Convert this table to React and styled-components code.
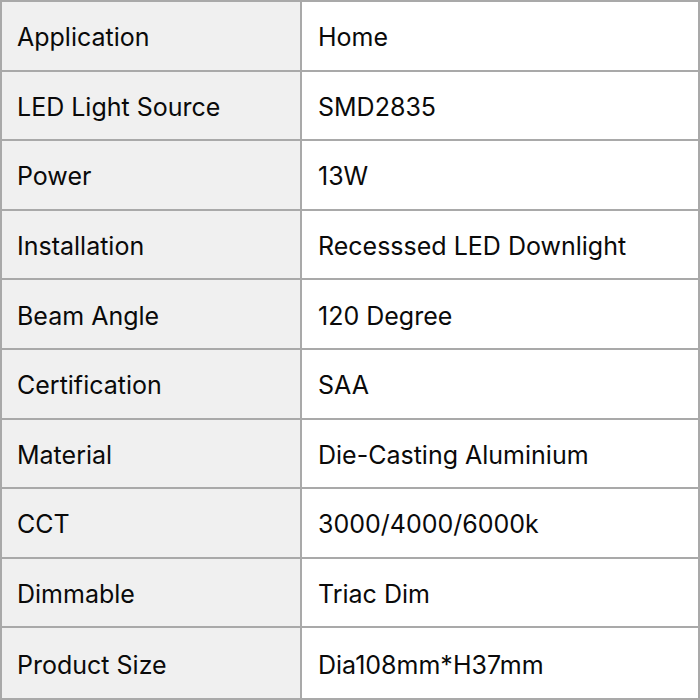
import React from 'react'
import styled, {createGlobalStyle} from 'styled-components'

const Global = createGlobalStyle`
  html, body {
    margin: 0;
    padding: 0;
    background: #fff;
  }
`;

const Table = styled.div`
  box-sizing: border-box;
  width: 700px;
  height: 700px;
  border: 2px solid #a9a9a9;
  display: grid;
  grid-template-columns: 300px 1fr;
  grid-template-rows: repeat(10, 1fr);
  font-family: Inter, "Liberation Sans", sans-serif;
  font-size: 25px;
  color: #0a0a0a;
`;

const Cell = styled.div`
  box-sizing: border-box;
  display: flex;
  align-items: center;
  padding: 3px 0 0 ${p => p.$label ? '15px' : '16px'};
  background: ${p => p.$label ? '#f0f0f0' : '#fff'};
  border-right: ${p => p.$label ? '2px solid #a9a9a9' : 'none'};
  border-bottom: ${p => p.$last ? 'none' : '2px solid #a9a9a9'};
`;

const specs = [
  ['Application', 'Home'],
  ['LED Light Source', 'SMD2835'],
  ['Power', '13W'],
  ['Installation', 'Recesssed LED Downlight'],
  ['Beam Angle', '120 Degree'],
  ['Certification', 'SAA'],
  ['Material', 'Die-Casting Aluminium'],
  ['CCT', '3000/4000/6000k'],
  ['Dimmable', 'Triac Dim'],
  ['Product Size', 'Dia108mm*H37mm'],
]

export default function App() {
  return (
    <>
      <Global />
      <Table>
        {specs.map(([k, v], i) => (
          <React.Fragment key={k}>
            <Cell $label $last={i === specs.length - 1}>{k}</Cell>
            <Cell $last={i === specs.length - 1}>{v}</Cell>
          </React.Fragment>
        ))}
      </Table>
    </>
  )
}
